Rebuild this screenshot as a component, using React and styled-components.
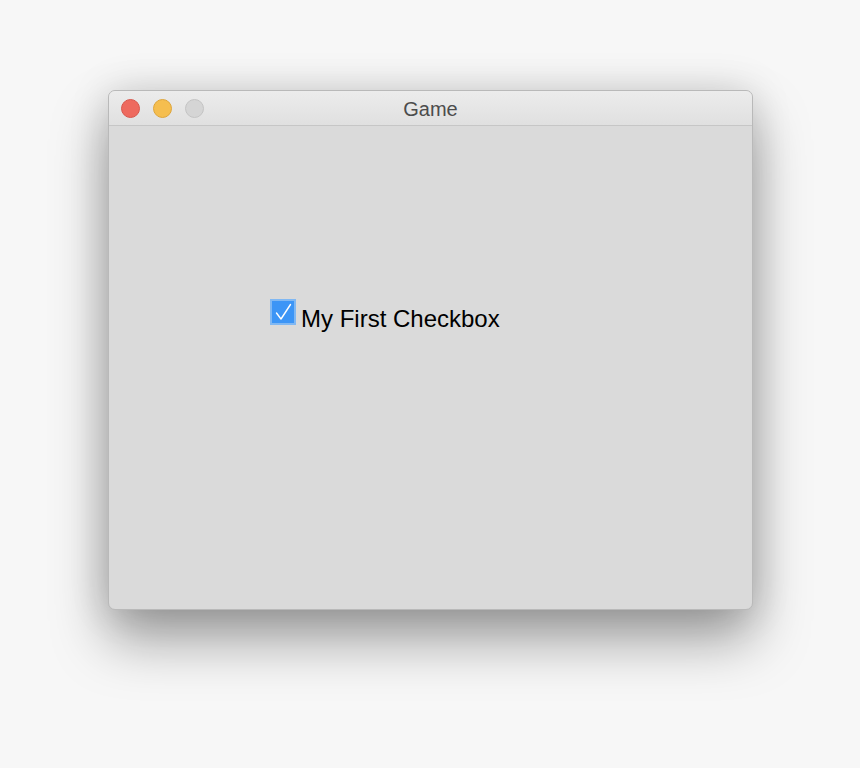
import React, { useState } from "react";
import styled, { createGlobalStyle } from "styled-components";

const Global = createGlobalStyle`
  html, body {
    margin: 0;
    padding: 0;
    background: #f7f7f7;
  }
  body {
    font-family: "Liberation Sans", Arial, sans-serif;
  }
`;

export default function App() {
  const [checked, setChecked] = useState(true);
  return (
    <Page>
      <Global />
      <Window>
        <TitleBar>
          <Lights>
            <Light color="#ee6a5f" border="#d8574d" />
            <Light color="#f5be4f" border="#dea53a" />
            <Light color="#d5d5d5" border="#c4c4c4" />
          </Lights>
          <Title>Game</Title>
        </TitleBar>
        <Body>
          <Check onClick={() => setChecked(!checked)}>
            <Box $on={checked}>
              {checked && (
                <svg width="22" height="22" viewBox="0 0 22 22">
                  <path
                    d="M4.5 12 L9 18 L18.5 3.5"
                    fill="none"
                    stroke="#fff"
                    strokeWidth="1.4"
                    strokeLinecap="round"
                    strokeLinejoin="round"
                  />
                </svg>
              )}
            </Box>
            <Label>My First Checkbox</Label>
          </Check>
        </Body>
      </Window>
    </Page>
  );
}

const Page = styled.div`
  width: 860px;
  height: 768px;
  padding: 90px 0 0 108px;
  box-sizing: border-box;
  overflow: hidden;
`;

const Window = styled.div`
  width: 645px;
  height: 520px;
  display: flex;
  flex-direction: column;
  background: #dadada;
  border: 1px solid #b9b9b9;
  border-radius: 7px;
  box-sizing: border-box;
  overflow: hidden;
  box-shadow: 0 0 40px rgba(0, 0, 0, 0.14), 0 30px 55px rgba(0, 0, 0, 0.36);
`;

const TitleBar = styled.div`
  position: relative;
  height: 34px;
  flex: none;
  display: flex;
  align-items: center;
  justify-content: center;
  background: linear-gradient(to bottom, #ececec, #e0e0e0);
  border-bottom: 1px solid #c6c6c6;
`;

const Lights = styled.div`
  position: absolute;
  left: 12px;
  top: 8px;
  display: flex;
  gap: 13px;
`;

const Light = styled.span`
  width: 19px;
  height: 19px;
  border-radius: 50%;
  box-sizing: border-box;
  background: ${(p) => p.color};
  border: 1px solid ${(p) => p.border};
`;

const Title = styled.div`
  font-family: "Liberation Sans", Arial, sans-serif;
  font-size: 20px;
  color: #4c4c4c;
  margin-top: 3px;
`;

const Body = styled.div`
  flex: 1;
  padding: 173px 0 0 161px;
`;

const Check = styled.label`
  display: flex;
  align-items: flex-start;
  gap: 5px;
  cursor: pointer;
`;

const Box = styled.span`
  width: 26px;
  height: 26px;
  flex: none;
  box-sizing: border-box;
  display: flex;
  align-items: center;
  justify-content: center;
  background: ${(p) => (p.$on ? "#3c95f6" : "#fff")};
  border: 2px solid ${(p) => (p.$on ? "#80b8f3" : "#aaa")};
`;

const Label = styled.span`
  font-family: "Liberation Sans", Arial, sans-serif;
  font-size: 24px;
  line-height: 26px;
  color: #000;
  margin-top: 7px;
`;
